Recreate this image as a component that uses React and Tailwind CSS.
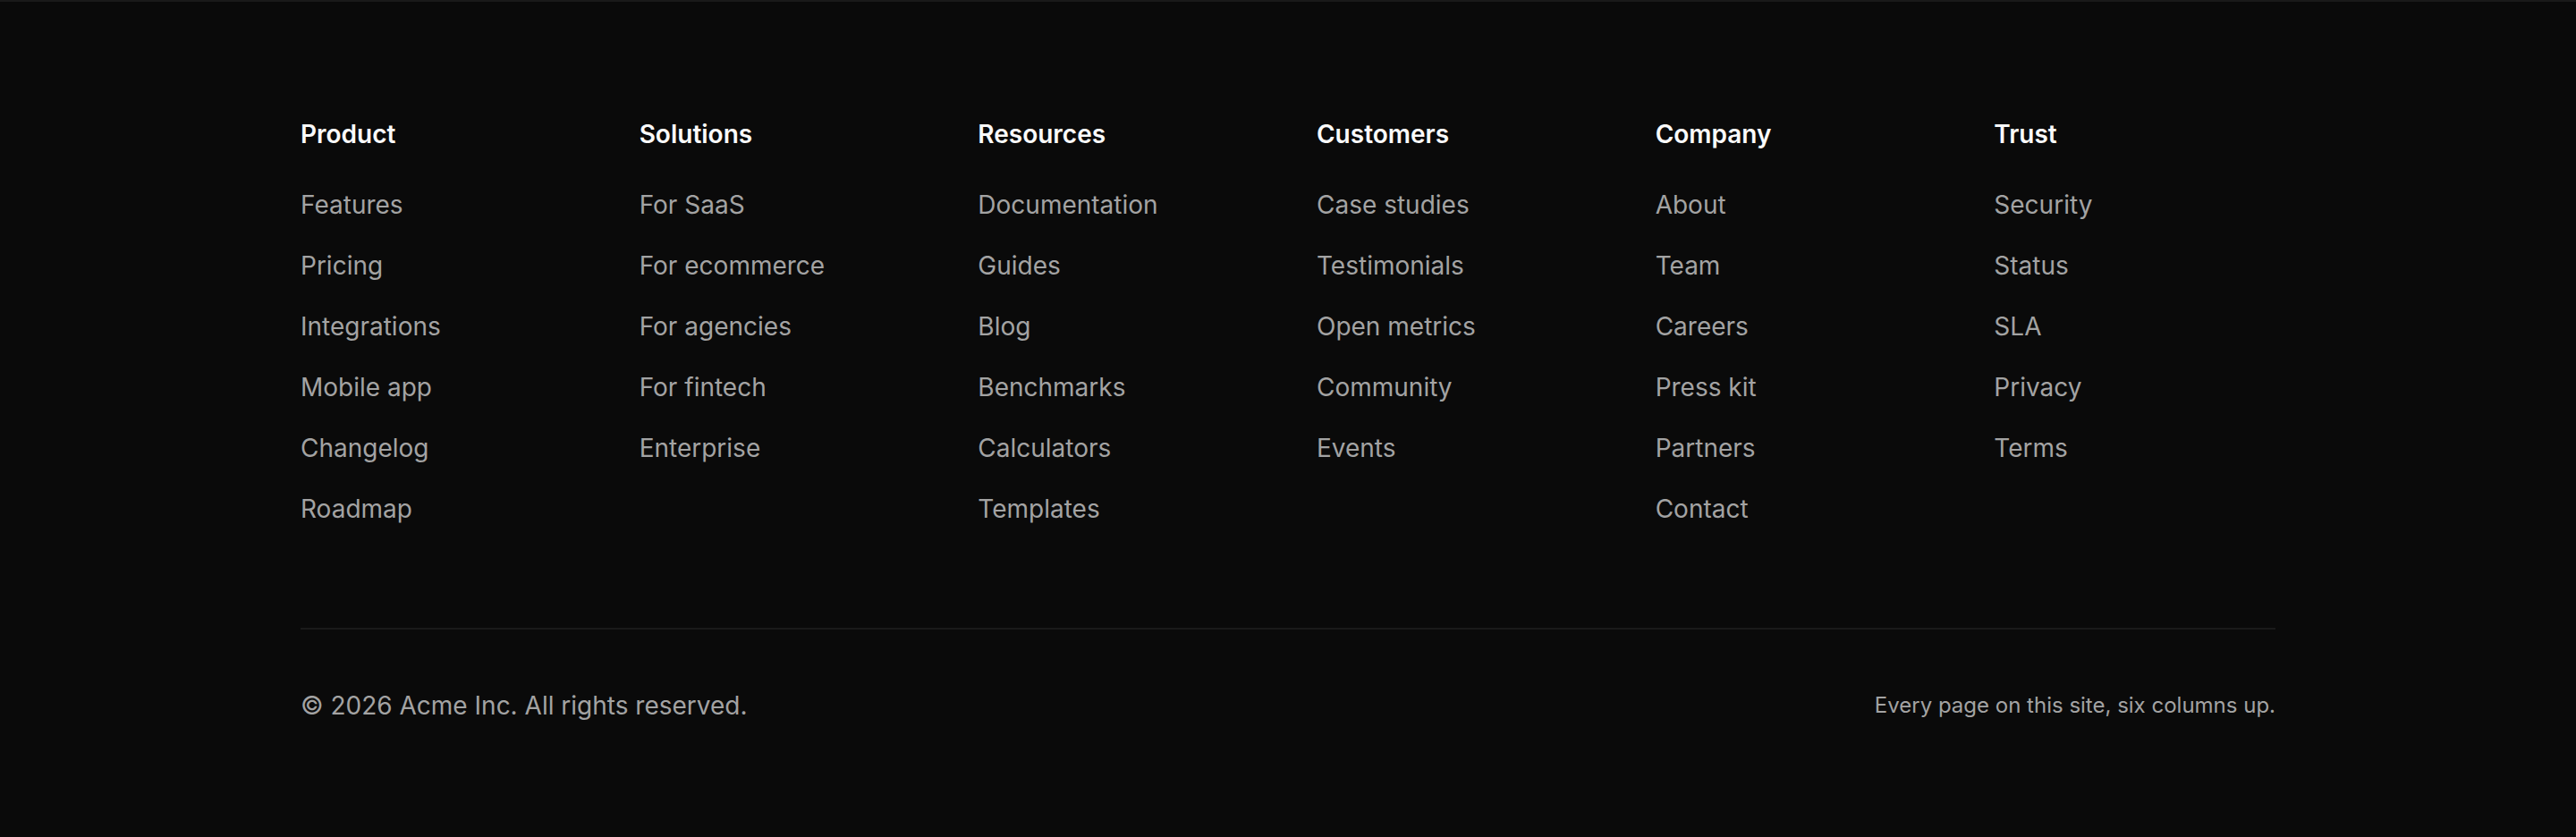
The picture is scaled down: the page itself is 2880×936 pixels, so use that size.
import React from 'react'

const COLUMNS = [
  { title: 'Product', links: ['Features', 'Pricing', 'Integrations', 'Mobile app', 'Changelog', 'Roadmap'] },
  { title: 'Solutions', links: ['For SaaS', 'For ecommerce', 'For agencies', 'For fintech', 'Enterprise'] },
  { title: 'Resources', links: ['Documentation', 'Guides', 'Blog', 'Benchmarks', 'Calculators', 'Templates'] },
  { title: 'Customers', links: ['Case studies', 'Testimonials', 'Open metrics', 'Community', 'Events'] },
  { title: 'Company', links: ['About', 'Team', 'Careers', 'Press kit', 'Partners', 'Contact'] },
  { title: 'Trust', links: ['Security', 'Status', 'SLA', 'Privacy', 'Terms'] }
]

function FooterColumn({ title, links }) {
  return (
    <div>
      <h3 className="text-[28px] leading-[40px] font-semibold text-[#fafafa]">{title}</h3>
      <ul className="mt-[39px] flex flex-col gap-[28px]">
        {links.map((link) => (
          <li key={link} className="text-[28px] leading-[40px]">
            <a href="#" className="text-[#a3a3a3] hover:text-white">
              {link}
            </a>
          </li>
        ))}
      </ul>
    </div>
  )
}

export default function App() {
  return (
    <footer
      className="min-h-[936px] bg-[#0a0a0a] border-t-2 border-[#1a1a1a]"
      style={{ fontFamily: 'Inter, "Noto Sans", sans-serif' }}
    >
      <div className="mx-auto w-[2208px] pt-[128px] pb-[128px]">
        <div className="grid grid-cols-6 gap-[64px]">
          {COLUMNS.map((col) => (
            <FooterColumn key={col.title} title={col.title} links={col.links} />
          ))}
        </div>

        <div className="mt-[113px] border-t-2 border-[#1a1a1a] pt-[65px] flex items-center justify-between">
          <p className="text-[28px] leading-[40px] text-[#a3a3a3]">© 2026 Acme Inc. All rights reserved.</p>
          <p className="text-[24px] leading-[36px] text-[#a3a3a3]">Every page on this site, six columns up.</p>
        </div>
      </div>
    </footer>
  )
}
